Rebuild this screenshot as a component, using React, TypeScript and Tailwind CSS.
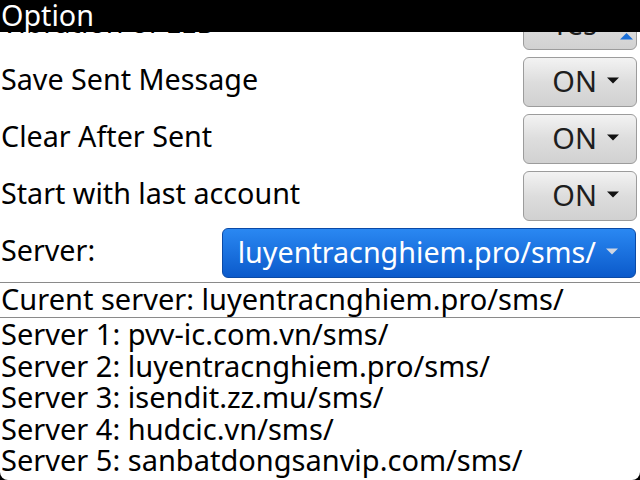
import React from 'react'

const font = { fontFamily: '"Noto Sans", "DejaVu Sans", sans-serif' }

type Row = { label: string; value: string }

const rows: Row[] = [
  { label: 'Vibration of LED', value: 'Yes' },
  { label: 'Save Sent Message', value: 'ON' },
  { label: 'Clear After Sent', value: 'ON' },
  { label: 'Start with last account', value: 'ON' },
]

const servers = [
  'pvv-ic.com.vn/sms/',
  'luyentracnghiem.pro/sms/',
  'isendit.zz.mu/sms/',
  'hudcic.vn/sms/',
  'sanbatdongsanvip.com/sms/',
]

function Caret({ color }: { color: string }) {
  return (
    <svg width="12" height="7" viewBox="0 0 12 7" aria-hidden="true">
      <path d="M0 0.5H12L6 6.5Z" fill={color} />
    </svg>
  )
}

function ChoiceButton({ value }: { value: string }) {
  return (
    <div className="mr-[3px] flex h-[50px] w-[114px] shrink-0 items-center justify-end gap-[10px] rounded-[6px] border border-[#9c9c9c] bg-gradient-to-b from-[#f3f3f3] via-[#dddddd] to-[#d1d1d1] pr-[17px] pb-[3px]">
      <span className="text-[29px] leading-[30px] text-[#1e1e1e]">{value}</span>
      <Caret color="#111" />
    </div>
  )
}

export default function App() {
  return (
    <div
      className="relative h-[480px] w-[640px] overflow-hidden bg-white text-black"
      style={font}
    >
      {/* scrolled list */}
      <div className="flex flex-col">
        <div className="flex flex-col gap-[7px]">
          {rows.map((r) => (
            <div key={r.label} className="flex h-[50px] items-center justify-between">
              <span className="pl-[1px] pb-[6px] text-[28.7px] leading-[30px]">{r.label}</span>
              <ChoiceButton value={r.value} />
            </div>
          ))}
          <div className="flex h-[50px] items-center justify-between">
            <span className="pl-[1px] pb-[6px] text-[28.7px] leading-[30px]">Server:</span>
            <div className="mr-[4px] flex h-[50px] w-[414px] items-center justify-end gap-[10px] rounded-[6px] border border-[#0b4aa6] bg-gradient-to-b from-[#2a88f2] to-[#0b5acb] pr-[17px] pb-[3px]">
              <span className="text-[28.7px] leading-[30px] text-white">luyentracnghiem.pro/sms/</span>
              <Caret color="#cfd6e2" />
            </div>
          </div>
        </div>

        <div className="mt-[4px] border-t border-[#8a8a8a] pl-[1px] pt-[1px] pb-[3px] text-[29px] leading-[30px]">
          Curent server: luyentracnghiem.pro/sms/
        </div>
        <div className="border-t border-[#8a8a8a] pl-[1px] text-[29px] leading-[31.5px]">
          {servers.map((s, i) => (
            <div key={s}>
              Server {i + 1}: {s}
            </div>
          ))}
        </div>
      </div>

      {/* title bar over the scrolled content */}
      <div className="absolute left-0 top-0 h-[32px] w-full bg-black pl-[1px] text-[28.7px] leading-[30px] text-white">
        Option
      </div>

      {/* scroll-up indicator */}
      <div className="absolute left-[620px] top-[33px]">
        <svg width="13" height="7" viewBox="0 0 13 7" aria-hidden="true">
          <path d="M0 6.5H13L6.5 0Z" fill="#1a6fd8" />
        </svg>
      </div>

      {/* rounded screen corners */}
      <div className="pointer-events-none absolute inset-0 rounded-b-[8px] shadow-[0_0_0_20px_#000]" />
    </div>
  )
}
